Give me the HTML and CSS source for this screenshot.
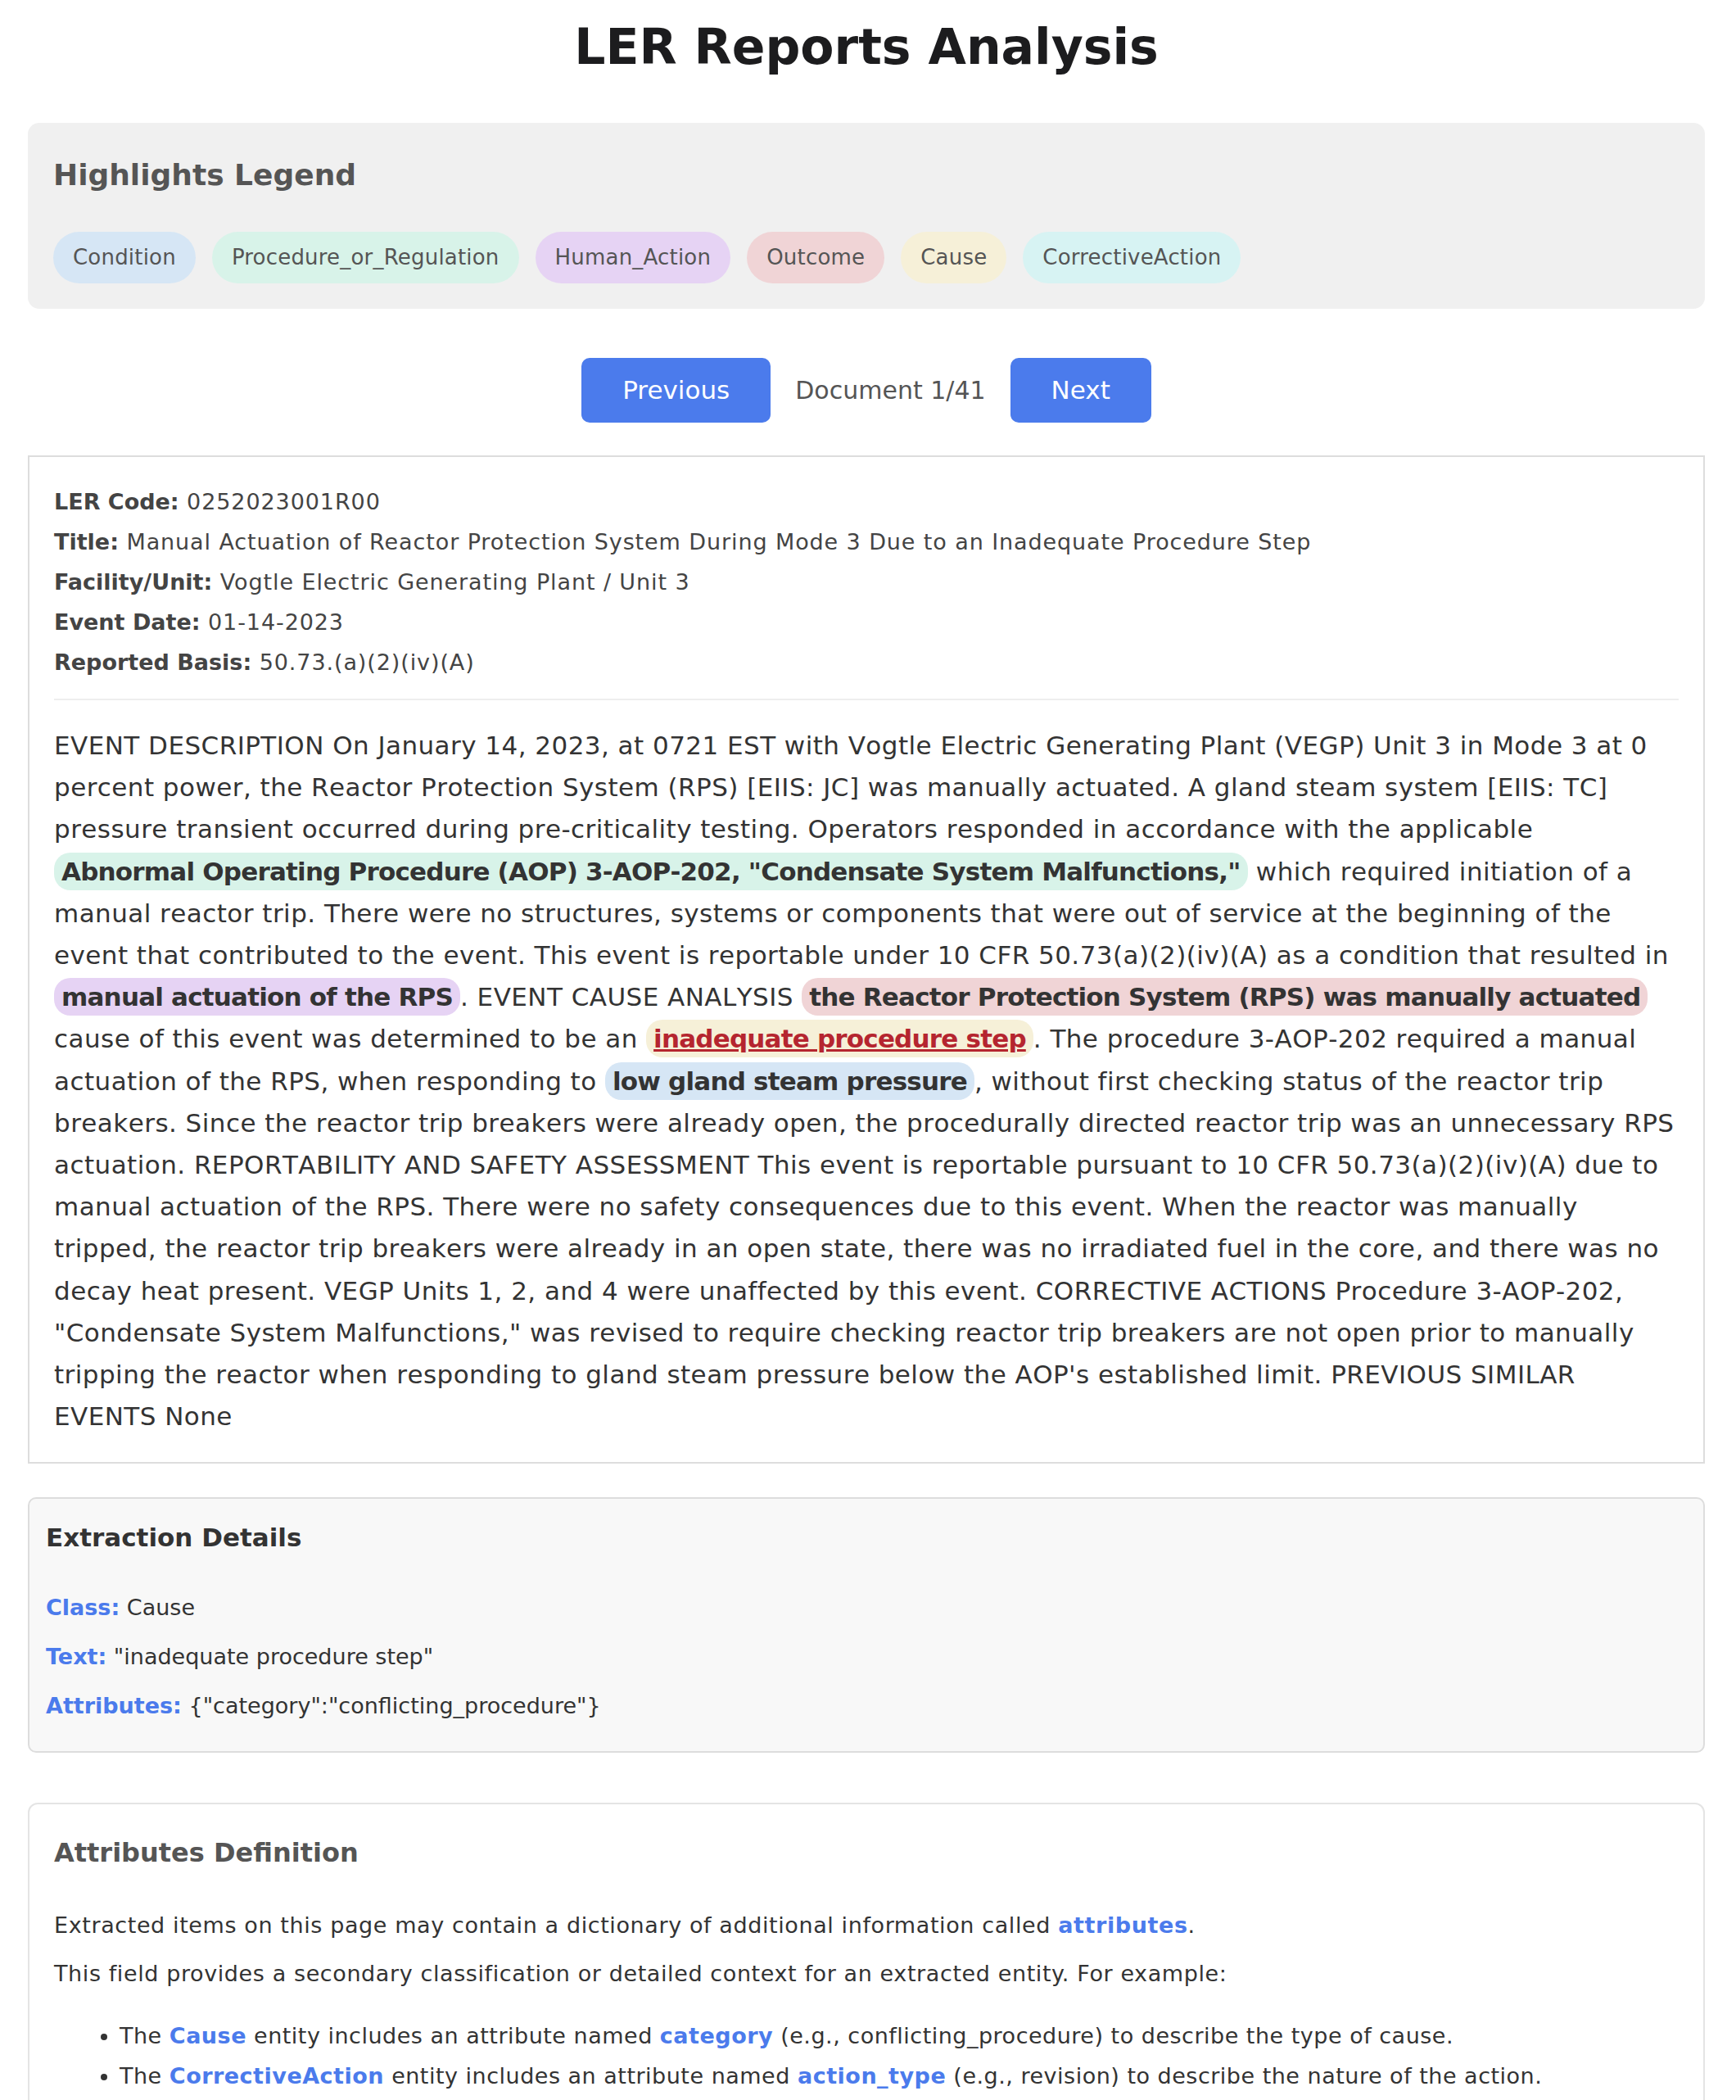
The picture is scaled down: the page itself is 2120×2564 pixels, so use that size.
FILE: index.html
```html
<!DOCTYPE html>
<html lang="en">
<head>
<meta charset="utf-8">
<title>LER Reports Analysis</title>
<link rel="stylesheet" href="styles.css">
</head>
<body>
<div class="page">
  <h1 class="title">LER Reports Analysis</h1>

  <section class="legend">
    <h2 class="legend-title">Highlights Legend</h2>
    <div class="legend-items">
      <span class="pill bg-condition">Condition</span>
      <span class="pill bg-procedure">Procedure_or_Regulation</span>
      <span class="pill bg-human">Human_Action</span>
      <span class="pill bg-outcome">Outcome</span>
      <span class="pill bg-cause">Cause</span>
      <span class="pill bg-corrective">CorrectiveAction</span>
    </div>
  </section>

  <nav class="pager">
    <button class="btn" type="button">Previous</button>
    <span class="pager-label">Document 1/41</span>
    <button class="btn" type="button">Next</button>
  </nav>

  <article class="doc">
    <div class="meta">
      <div class="meta-row"><b>LER Code:</b> 0252023001R00</div>
      <div class="meta-row"><b>Title:</b> Manual Actuation of Reactor Protection System During Mode 3 Due to an Inadequate Procedure Step</div>
      <div class="meta-row"><b>Facility/Unit:</b> Vogtle Electric Generating Plant / Unit 3</div>
      <div class="meta-row"><b>Event Date:</b> 01-14-2023</div>
      <div class="meta-row"><b>Reported Basis:</b> 50.73.(a)(2)(iv)(A)</div>
    </div>
    <hr class="divider">
    <p class="doc-text">EVENT DESCRIPTION On January 14, 2023, at 0721 EST with Vogtle Electric Generating Plant (VEGP) Unit 3 in Mode 3 at 0 percent power, the Reactor Protection System (RPS) [EIIS: JC] was manually actuated. A gland steam system [EIIS: TC] pressure transient occurred during pre-criticality testing. Operators responded in accordance with the applicable <span class="hl bg-procedure">Abnormal Operating Procedure (AOP) 3-AOP-202, "Condensate System Malfunctions,"</span> which required initiation of a manual reactor trip. There were no structures, systems or components that were out of service at the beginning of the event that contributed to the event. This event is reportable under 10 CFR 50.73(a)(2)(iv)(A) as a condition that resulted in <span class="hl bg-human">manual actuation of the RPS</span>. EVENT CAUSE ANALYSIS <span class="hl bg-outcome">the Reactor Protection System (RPS) was manually actuated</span> cause of this event was determined to be an <span class="hl bg-cause hl-active">inadequate procedure step</span>. The procedure 3-AOP-202 required a manual actuation of the RPS, when responding to <span class="hl bg-condition">low gland steam pressure</span>, without first checking status of the reactor trip breakers. Since the reactor trip breakers were already open, the procedurally directed reactor trip was an unnecessary RPS actuation. REPORTABILITY AND SAFETY ASSESSMENT This event is reportable pursuant to 10 CFR 50.73(a)(2)(iv)(A) due to manual actuation of the RPS. There were no safety consequences due to this event. When the reactor was manually tripped, the reactor trip breakers were already in an open state, there was no irradiated fuel in the core, and there was no decay heat present. VEGP Units 1, 2, and 4 were unaffected by this event. CORRECTIVE ACTIONS Procedure 3-AOP-202, "Condensate System Malfunctions," was revised to require checking reactor trip breakers are not open prior to manually tripping the reactor when responding to gland steam pressure below the AOP's established limit. PREVIOUS SIMILAR EVENTS None</p>
  </article>

  <section class="extract">
    <h3 class="extract-title">Extraction Details</h3>
    <p class="extract-row"><b class="key">Class:</b> Cause</p>
    <p class="extract-row"><b class="key">Text:</b> "inadequate procedure step"</p>
    <p class="extract-row"><b class="key">Attributes:</b> {"category":"conflicting_procedure"}</p>
  </section>

  <section class="attrs">
    <h3 class="attrs-title">Attributes Definition</h3>
    <p class="attrs-text">Extracted items on this page may contain a dictionary of additional information called <b class="key">attributes</b>.</p>
    <p class="attrs-text">This field provides a secondary classification or detailed context for an extracted entity. For example:</p>
    <ul class="attrs-list">
      <li>The <b class="key">Cause</b> entity includes an attribute named <b class="key">category</b> (e.g., conflicting_procedure) to describe the type of cause.</li>
      <li>The <b class="key">CorrectiveAction</b> entity includes an attribute named <b class="key">action_type</b> (e.g., revision) to describe the nature of the action.</li>
    </ul>
  </section>
</div>
</body>
</html>
```

FILE: styles.css
```css
* { box-sizing: border-box; }

html, body {
  margin: 0;
  padding: 0;
  background: #ffffff;
}

body {
  font-family: "DejaVu Sans", "Liberation Sans", sans-serif;
  color: #333333;
}

.page {
  width: 2048px;
  margin-left: 34px;
  padding-top: 19px;
}

.title {
  margin: 0 0 54px;
  font-size: 60px;
  line-height: 77px;
  font-weight: 700;
  text-align: center;
  color: #1c1c1e;
}

/* Legend */
.legend {
  background: #f0f0f0;
  border-radius: 14px;
  padding: 40px 31px 31px;
}

.legend-title {
  margin: 0 0 46px;
  font-size: 36px;
  line-height: 47px;
  font-weight: 700;
  color: #555555;
}

.legend-items {
  display: flex;
  flex-wrap: wrap;
  gap: 20px;
}

.pill {
  font-size: 26px;
  line-height: 39px;
  padding: 12px 24px;
  border-radius: 32px;
  color: #555555;
  letter-spacing: 0.2px;
}

.bg-condition { background: #d6e6f5; }
.bg-procedure { background: #d8f3e9; }
.bg-human { background: #e6d3f4; }
.bg-outcome { background: #f0d4d6; }
.bg-cause { background: #f6f0d8; }
.bg-corrective { background: #d7f3f3; }

/* Pager */
.pager {
  display: flex;
  justify-content: center;
  align-items: center;
  gap: 30px;
  margin: 60px 0 40px;
}

.btn {
  font-family: inherit;
  font-size: 31px;
  line-height: 39px;
  padding: 20px 50px;
  border: 0;
  border-radius: 10px;
  background: #4b7bec;
  color: #ffffff;
}

.pager-label {
  font-size: 30px;
  color: #555555;
}

/* Document card */
.doc {
  border: 2px solid #dddddd;
  padding: 30px;
}

.meta-row {
  font-size: 27px;
  line-height: 49px;
  letter-spacing: 0.9px;
  color: #444444;
}

.meta-row b {
  font-weight: 700;
  letter-spacing: 0;
}

.divider {
  border: 0;
  border-top: 2px solid #eeeeee;
  margin: 20px 0 30px;
}

.doc-text {
  margin: 0;
  font-size: 31px;
  line-height: 51.2px;
  letter-spacing: 0.45px;
  font-kerning: none;
  color: #333333;
}

.hl {
  font-weight: 700;
  padding: 5px 9px;
  border-radius: 20px;
  letter-spacing: -0.8px;
  color: #333333;
}

.hl-active {
  color: #b5252f;
  text-decoration: underline;
  text-decoration-thickness: 3px;
}

/* Extraction details */
.extract {
  margin-top: 41px;
  background: #f8f8f8;
  border: 2px solid #dddddd;
  border-radius: 10px;
  padding: 28px 20px 18px;
}

.extract-title {
  margin: 0 0 44px;
  font-size: 31px;
  line-height: 38px;
  font-weight: 700;
  color: #333333;
}

.extract-row {
  margin: 0 0 15px;
  font-size: 27px;
  line-height: 45px;
  color: #333333;
}

.key {
  color: #4b7bec;
  font-weight: 700;
}

/* Attributes definition */
.attrs {
  margin-top: 61px;
  background: #ffffff;
  border: 2px solid #e4e4e4;
  border-radius: 12px;
  padding: 38px 30px 30px;
}

.attrs-title {
  margin: 0 0 44px;
  font-size: 32px;
  line-height: 43px;
  font-weight: 700;
  color: #555555;
}

.attrs-text {
  margin: 0 0 14px;
  font-size: 27px;
  line-height: 45px;
  letter-spacing: 0.6px;
  color: #333333;
}

.attrs-list {
  margin: 31px 0 0;
  padding-left: 80px;
  font-size: 27px;
  line-height: 45px;
  letter-spacing: 0.5px;
  color: #333333;
}

.attrs-list li {
  margin-bottom: 4px;
}
```
